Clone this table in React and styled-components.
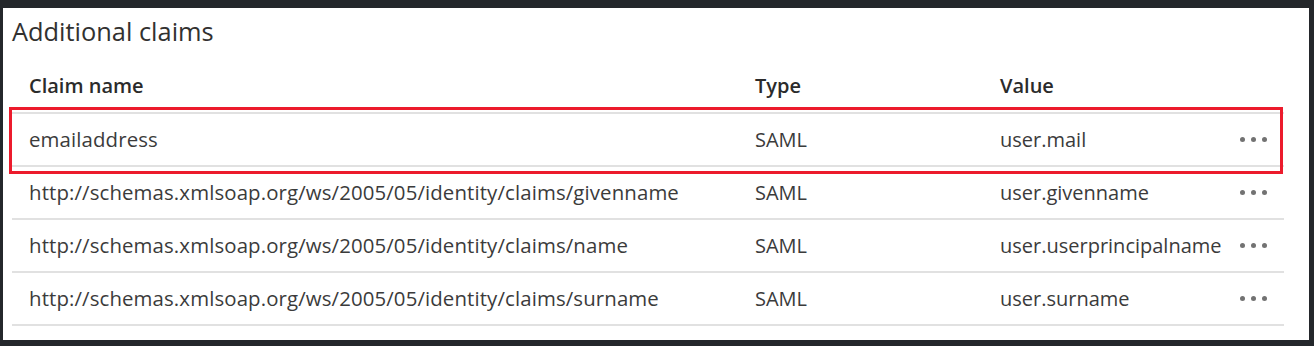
import React from "react";
import styled, { createGlobalStyle } from "styled-components";

const Global = createGlobalStyle`
  html, body { margin: 0; padding: 0; background: #24272b; }
  * { box-sizing: border-box; }
`;

const Frame = styled.div`
  width: 1314px;
  height: 346px;
  padding: 8px 5px 6px 3px;
  background: #24272b;
`;

const Panel = styled.section`
  height: 332px;
  background: #ffffff;
  padding: 6px 0 0 9px;
  font-family: "Open Sans", "Noto Sans", sans-serif;
  color: #323130;
`;

const Title = styled.h2`
  margin: 0 0 10px 0;
  font-size: 25.4px;
  line-height: 34px;
  font-weight: 400;
  color: #323130;
`;

const Table = styled.div`
  position: relative;
  width: 1272px;
`;

const Row = styled.div`
  display: grid;
  grid-template-columns: 726px 245px 240px 61px;
  align-items: center;
  height: ${(p) => (p.$header ? "56px" : "53px")};
  border-bottom: 2px solid #e1e1e1;
  font-size: 20px;
  font-weight: ${(p) => (p.$header ? 600 : 400)};
  color: ${(p) => (p.$header ? "#2b2b2b" : "#3b3b3b")};
`;

const Cell = styled.div`
  padding-left: 17px;
  white-space: nowrap;
  line-height: 27px;
  font-size: ${(p) => (p.$wide ? "20.4px" : "inherit")};
  letter-spacing: ${(p) => (p.$wide ? "0.12px" : "0")};
`;

const Dots = styled.div`
  display: flex;
  gap: 6px;
  padding-left: 17px;
  align-items: center;
`;

const Dot = styled.span`
  width: 5px;
  height: 5px;
  border-radius: 50%;
  background: #727272;
`;

const Highlight = styled.div`
  position: absolute;
  left: -3px;
  top: ${(p) => p.$top}px;
  width: 1274px;
  height: 67px;
  border: 3px solid #ec1b2c;
  pointer-events: none;
`;

const claims = [
  { name: "emailaddress", type: "SAML", value: "user.mail" },
  {
    name: "http://schemas.xmlsoap.org/ws/2005/05/identity/claims/givenname",
    type: "SAML",
    value: "user.givenname",
  },
  {
    name: "http://schemas.xmlsoap.org/ws/2005/05/identity/claims/name",
    type: "SAML",
    value: "user.userprincipalname",
  },
  {
    name: "http://schemas.xmlsoap.org/ws/2005/05/identity/claims/surname",
    type: "SAML",
    value: "user.surname",
  },
];

export default function App() {
  return (
    <>
      <Global />
      <Frame>
        <Panel>
          <Title>Additional claims</Title>
          <Table>
            <Row $header>
              <Cell>Claim name</Cell>
              <Cell>Type</Cell>
              <Cell>Value</Cell>
              <Cell />
            </Row>
            {claims.map((c) => (
              <Row key={c.name}>
                <Cell $wide>{c.name}</Cell>
                <Cell>{c.type}</Cell>
                <Cell>{c.value}</Cell>
                <Dots>
                  <Dot />
                  <Dot />
                  <Dot />
                </Dots>
              </Row>
            ))}
            <Highlight $top={49} />
          </Table>
        </Panel>
      </Frame>
    </>
  );
}
